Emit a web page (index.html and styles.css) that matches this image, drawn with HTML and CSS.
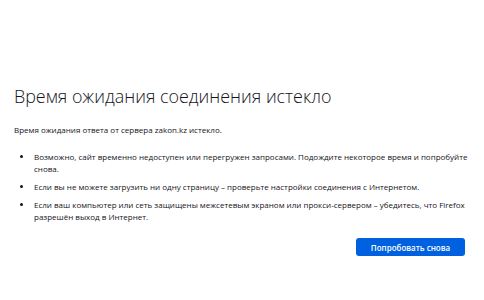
FILE: index.html
```html
<!DOCTYPE html>
<html lang="ru">
<head>
<meta charset="utf-8">
<title>Ошибка</title>
<link rel="stylesheet" href="styles.css">
</head>
<body>
<main class="container">
  <h1 class="title">Время ожидания соединения истекло</h1>
  <p class="lead">Время ожидания ответа от сервера zakon.kz истекло.</p>
  <ul class="tips">
    <li>Возможно, сайт временно недоступен или перегружен запросами. Подождите некоторое время и попробуйте снова.</li>
    <li>Если вы не можете загрузить ни одну страницу – проверьте настройки соединения с Интернетом.</li>
    <li>Если ваш компьютер или сеть защищены межсетевым экраном или прокси-сервером – убедитесь, что Firefox разрешён выход в Интернет.</li>
  </ul>
  <div class="actions">
    <button class="retry">Попробовать снова</button>
  </div>
</main>
</body>
</html>
```
FILE: styles.css
```css
html, body {
  margin: 0;
  padding: 0;
  background: #ffffff;
}
body {
  font-family: "Open Sans", "Noto Sans", sans-serif;
  color: #15141a;
}
.container {
  padding: 83px 12px 0 14px;
}
.title {
  margin: 0;
  font-size: 17.9px;
  font-weight: 300;
  line-height: 26px;
  color: #15141a;
}
.lead {
  margin: 15px 0 0;
  font-size: 8px;
  line-height: 12px;
}
.tips {
  margin: 15px 0 0;
  padding-left: 19px;
  font-size: 8px;
  line-height: 12px;
}
.tips li {
  margin-bottom: 6px;
  padding-left: 1px;
}
.actions {
  display: flex;
  justify-content: flex-end;
  margin-top: 15px;
  padding-right: 7px;
}
.retry {
  font-family: inherit;
  font-size: 8px;
  font-weight: 600;
  color: #ffffff;
  background: #0061e0;
  border: none;
  border-radius: 3px;
  width: 109px;
  height: 18px;
  padding: 0;
}
```
